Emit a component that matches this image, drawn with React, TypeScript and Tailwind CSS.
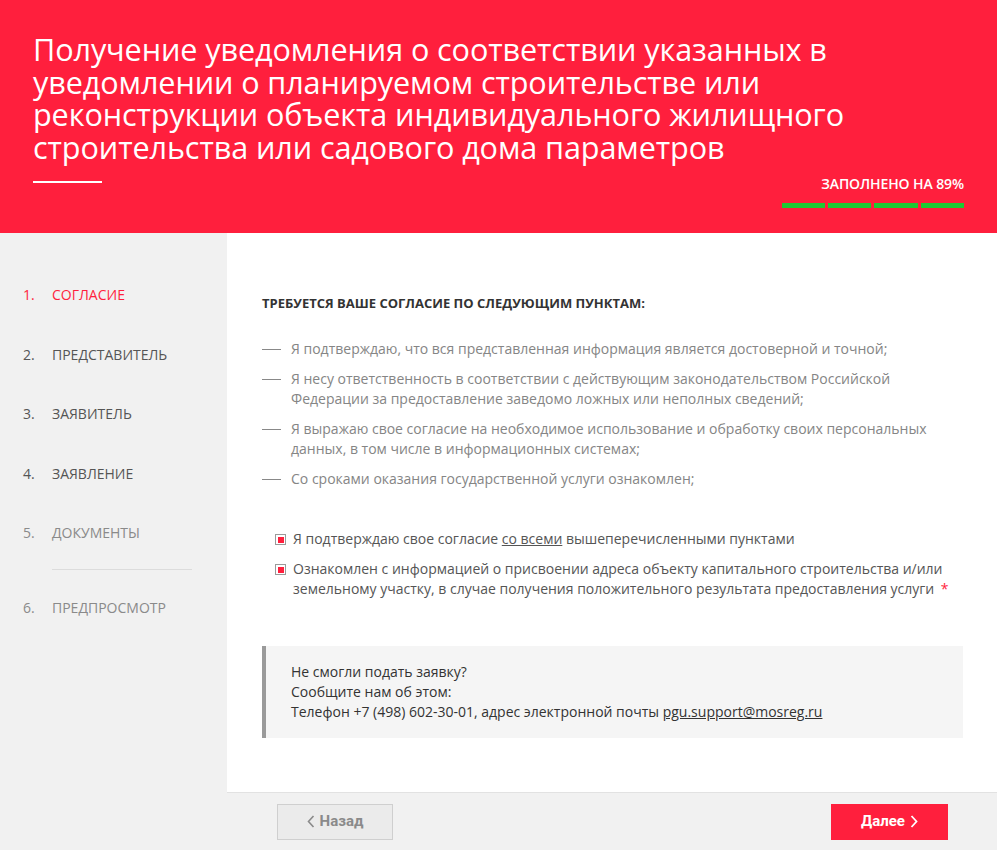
import React from 'react';

const steps = [
  { n: '1.', label: 'СОГЛАСИЕ', state: 'active' },
  { n: '2.', label: 'ПРЕДСТАВИТЕЛЬ', state: 'done' },
  { n: '3.', label: 'ЗАЯВИТЕЛЬ', state: 'done' },
  { n: '4.', label: 'ЗАЯВЛЕНИЕ', state: 'done' },
  { n: '5.', label: 'ДОКУМЕНТЫ', state: 'todo' },
];

const points = [
  'Я подтверждаю, что вся представленная информация является достоверной и точной;',
  'Я несу ответственность в соответствии с действующим законодательством Российской Федерации за предоставление заведомо ложных или неполных сведений;',
  'Я выражаю свое согласие на необходимое использование и обработку своих персональных данных, в том числе в информационных системах;',
  'Со сроками оказания государственной услуги ознакомлен;',
];

const Check: React.FC = () => (
  <span className="mt-[5px] flex h-[11px] w-[11px] shrink-0 items-center justify-center border border-[#9a9a9a] bg-white">
    <span className="h-[6px] w-[6px] bg-[#ff1f3d]" />
  </span>
);

const App: React.FC = () => {
  return (
    <div className="flex min-h-[850px] w-[997px] flex-col font-['Open_Sans',sans-serif]">
      <header className="h-[233px] bg-[#ff1f3d] px-[33px] pt-[33px] text-white">
        <h1 className="w-[870px] text-[30.6px] font-normal leading-[32.5px] tracking-[-0.1px]">
          Получение уведомления о соответствии указанных в уведомлении о планируемом строительстве или
          реконструкции объекта индивидуального жилищного строительства или садового дома параметров
        </h1>
        <div className="flex items-start justify-between">
          <div className="mt-[18px] h-[2px] w-[69px] bg-white" />
          <div className="mt-[11px] flex flex-col items-end">
            <div className="text-[14px] font-semibold leading-[19px] tracking-[-0.1px]">ЗАПОЛНЕНО НА 89%</div>
            <div className="mt-[10px] flex gap-[3px]">
              <div className="h-[5px] w-[43px] bg-[#1ec933]" />
              <div className="h-[5px] w-[43px] bg-[#1ec933]" />
              <div className="h-[5px] w-[44px] bg-[#1ec933]" />
              <div className="h-[5px] w-[43px] bg-[#1ec933]" />
            </div>
          </div>
        </div>
      </header>

      <div className="flex flex-1">
        <aside className="w-[227px] shrink-0 bg-[#f1f1f1] pt-[50px] text-[14px]">
          {steps.map((s) => (
            <div
              key={s.n}
              className={`flex h-[59.5px] items-start pl-[23px] pt-[1px] ${
                s.state === 'active'
                  ? 'text-[#ff1f3d]'
                  : s.state === 'done'
                  ? 'text-[#555]'
                  : 'text-[#8a8a8a]'
              }`}
            >
              <span className="w-[29px]">{s.n}</span>
              <span>{s.label}</span>
            </div>
          ))}
          <div className="ml-[52px] mt-[-12px] h-px w-[140px] bg-[#dcdcdc]" />
          <div className="flex pl-[23px] pt-[27px] text-[#8a8a8a]">
            <span className="w-[29px]">6.</span>
            <span>ПРЕДПРОСМОТР</span>
          </div>
        </aside>

        <main className="flex flex-1 flex-col bg-white">
          <div className="flex-1 pl-[35px] pr-[34px] pt-[61px]">
            <h2 className="text-[13px] font-bold leading-[18px] text-[#333]">
              ТРЕБУЕТСЯ ВАШЕ СОГЛАСИЕ ПО СЛЕДУЮЩИМ ПУНКТАМ:
            </h2>
            <ul className="mt-[27px] flex flex-col gap-[10px] text-[14px] leading-[20px] text-[#858585]">
              {points.map((p) => (
                <li key={p} className="flex">
                  <span className="mt-[10px] mr-[10px] h-px w-[19px] shrink-0 bg-[#888]" />
                  <span className="max-w-[650px]">{p}</span>
                </li>
              ))}
            </ul>

            <div className="mt-[40px] flex flex-col gap-[10px] pl-[13px] text-[14px] leading-[20px] text-[#555]">
              <div className="flex gap-[7px]">
                <Check />
                <span>
                  Я подтверждаю свое согласие <span className="underline">со всеми</span> вышеперечисленными пунктами
                </span>
              </div>
              <div className="flex gap-[7px]">
                <Check />
                <span className="max-w-[670px]">
                  Ознакомлен с информацией о присвоении адреса объекту капитального строительства и/или земельному
                  участку, в случае получения положительного результата предоставления услуги{' '}
                  <span className="ml-[3px] text-[#ff1f3d]">*</span>
                </span>
              </div>
            </div>

            <div className="mt-[47px] border-l-4 border-[#9a9a9a] bg-[#f5f5f5] py-[16px] pl-[25px] text-[14px] leading-[20px] text-[#333]">
              <p>Не смогли подать заявку?</p>
              <p>Сообщите нам об этом:</p>
              <p>
                Телефон +7 (498) 602-30-01, адрес электронной почты{' '}
                <span className="underline">pgu.support@mosreg.ru</span>
              </p>
            </div>
          </div>

          <footer className="mt-[45px] flex h-[58px] items-center justify-between border-t border-[#e2e2e2] bg-[#f1f1f1] pl-[50px] pr-[49px]">
            <button className="flex h-[36px] w-[116px] items-center justify-center gap-[5px] border border-[#cfcfcf] bg-[#ebebeb] font-['Liberation_Sans_Narrow','Roboto',sans-serif] text-[15px] font-bold text-[#8a8a8a]">
              <svg width="8" height="13" viewBox="0 0 8 13" fill="none" stroke="currentColor" strokeWidth="1.6">
                <path d="M6.5 1 1.5 6.5 6.5 12" />
              </svg>
              <span>Назад</span>
            </button>
            <button className="flex h-[36px] w-[117px] items-center justify-center gap-[5px] bg-[#ff1f3d] font-['Liberation_Sans_Narrow','Roboto',sans-serif] text-[15px] font-bold text-white">
              <span>Далее</span>
              <svg width="8" height="13" viewBox="0 0 8 13" fill="none" stroke="currentColor" strokeWidth="1.8">
                <path d="M1.5 1 6.5 6.5 1.5 12" />
              </svg>
            </button>
          </footer>
        </main>
      </div>
    </div>
  );
};

export default App;
